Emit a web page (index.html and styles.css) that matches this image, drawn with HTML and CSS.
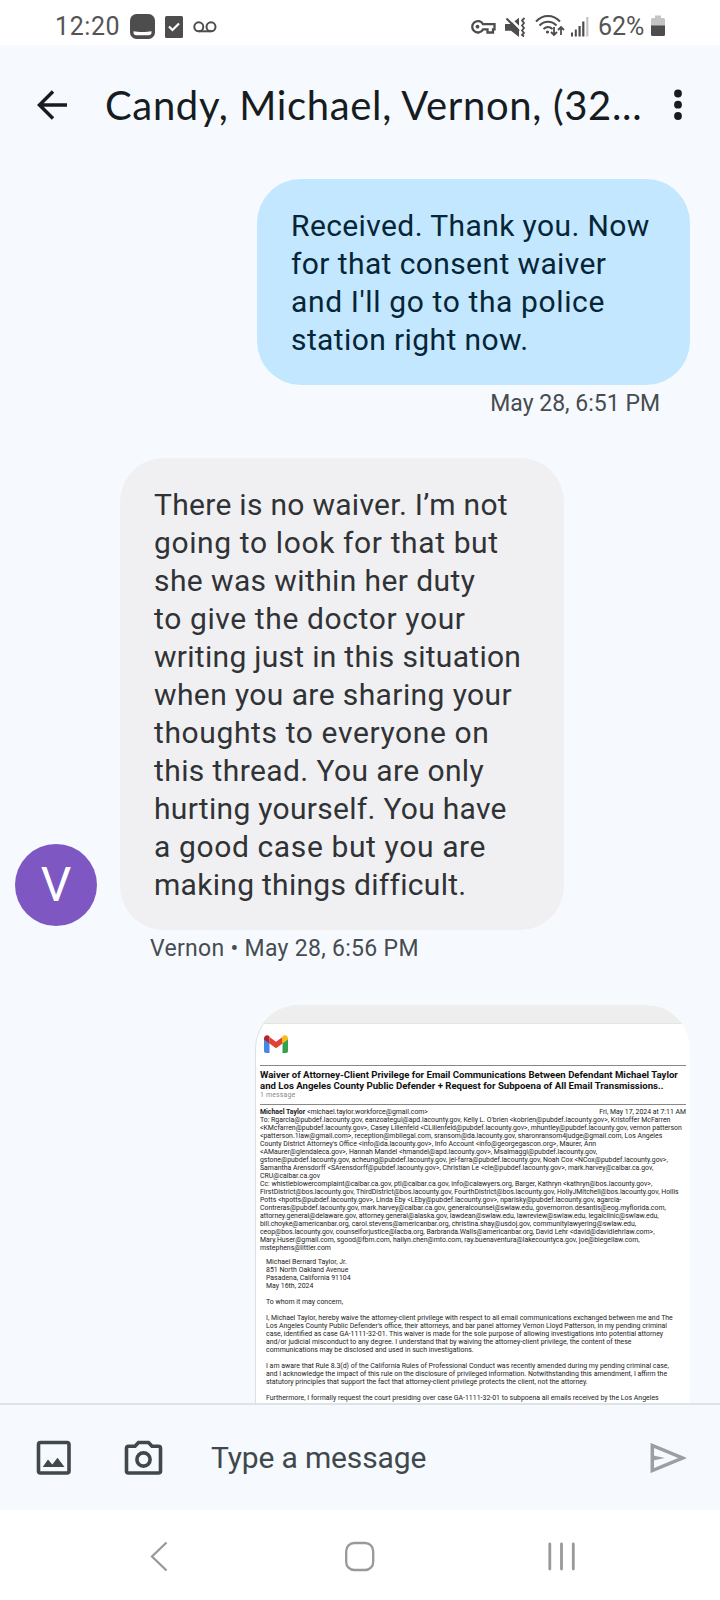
FILE: index.html
```html
<!DOCTYPE html>
<html lang="en">

<head>
  <meta charset="UTF-8" />
  <meta name="viewport" content="width=device-width, initial-scale=1.0" />
  <title>Messages</title>
  <link rel="stylesheet" href="styles.css">
</head>

<body>

  <!-- Status bar -->
  <div class="statusbar">
    <div class="status-left">
      <span class="clock">12:20</span>
      <svg class="app" width="25" height="25" viewBox="0 0 25 25">
        <rect width="25" height="25" rx="6.5" fill="#4d4d4d" />
        <path d="M3.500 17.300c4.500.9 13.500.9 18 0v1.200q0 2.800-2.800 2.800h-12.400q-2.800 0-2.800-2.800z" fill="#fff" />
      </svg>
      <svg class="task" width="18" height="22" viewBox="0 0 18 22">
        <rect width="18" height="22" rx="1.500" fill="#4d4d4d" />
        <path d="M4 10.500l3.500 3.500 6.500-6.500" fill="none" stroke="#fff" stroke-width="2.200" />
      </svg>
      <svg class="voicemail" width="24" height="12" viewBox="0 0 24 12" fill="none" stroke="#4d4d4d" stroke-width="2">
        <circle cx="5.800" cy="5.800" r="4.500" />
        <circle cx="18" cy="5.800" r="4.500" />
        <path d="M5.800 10.300H18" />
      </svg>
    </div>
    <div class="status-right">
      <svg class="key" width="25" height="16" viewBox="0 0 25 16" fill="none" stroke="#4d4d4d" stroke-width="2.300">
        <path d="M12 5.200A5.700 5.700 0 1 0 12 10.400H16.500V13.500H22V10.400H23.500V5.200Z" />
        <circle cx="6.500" cy="7.700" r="1.900" fill="#4d4d4d" stroke="none" />
      </svg>
      <svg class="mute" width="21" height="21" viewBox="0 0 21 21">
        <path d="M0 7h5l2-1.700 7 7V20L6 13.700H0zM9.500 4.200L14 0.800v8z" fill="#4d4d4d" />
        <path d="M1.500 1.500L14 14" stroke="#4d4d4d" stroke-width="2" />
        <path d="M19.500 1l-2.500 2.500 2 2.500-2 2.500 2 2.500-2 2.500 2 2.500-2 2 2 1.500" fill="none" stroke="#4d4d4d" stroke-width="1.800" />
      </svg>
      <svg class="wifi" width="30" height="22" viewBox="0 0 30 22" fill="none" stroke="#4d4d4d" stroke-width="2">
        <path d="M1 6.500C8-.8 18-.8 25 6.500M4.500 10.500c5-5 12-5 17 0M8.500 14c3-2.700 6-2.700 9 0" />
        <circle cx="12.500" cy="17" r="1.600" fill="#4d4d4d" stroke="none" />
        <path d="M19 12v8M16 17l3 3 3-3M26 20v-8M23 15l3-3 3 3" stroke-width="1.800" />
      </svg>
      <svg class="signal" width="19" height="20" viewBox="0 0 19 20" fill="#4d4d4d">
        <rect x="0" y="15.500" width="2" height="4" />
        <rect x="3.800" y="12.500" width="2" height="7" />
        <rect x="7.500" y="9" width="2.200" height="10.500" />
        <rect x="11.200" y="4.500" width="2.200" height="15" />
        <rect x="15.200" y="0" width="2.200" height="19.500" fill="#c4c4c4" />
      </svg>
      <span class="percent">62%</span>
      <svg class="battery" width="14" height="22" viewBox="0 0 14 22">
        <path d="M4 0.500h6V3h2.500q1.500 0 1.500 1.500V11H0V4.500Q0 3 1.500 3H4z" fill="#c4c4c4" />
        <path d="M0 10.500h14v9q0 1.500-1.500 1.500h-11Q0 21 0 19.500z" fill="#4d4d4d" />
      </svg>
    </div>
  </div>

  <!-- Conversation header -->
  <header class="header">
    <svg class="back" width="31" height="30" viewBox="0 0 31 30" fill="none" stroke="#171c1f" stroke-width="3.500">
      <path d="M30 15H2.500M16 1.500L2.500 15 16 28.500" />
    </svg>
    <h1 class="title">Candy, Michael, Vernon, (32...</h1>
    <svg class="more" width="8" height="32" viewBox="0 0 8 32" fill="#171c1f">
      <circle cx="4" cy="4.500" r="3.900" />
      <circle cx="4" cy="15.700" r="3.900" />
      <circle cx="4" cy="27" r="3.900" />
    </svg>
  </header>

  <!-- Thread -->
  <main class="thread">
    <div class="bubble sent">Received. Thank you. Now<br>for that consent waiver<br><span class="loose">and I'll go to tha police</span><br>station right now.</div>
    <div class="meta meta-sent">May 28, 6:51 PM</div>

    <div class="row">
      <div class="avatar">V</div>
      <div class="bubble received"><span class="tight">There is no waiver. I’m not</span><br><span class="loose">going to look for that but</span><br>she was within her duty<br><span class="loose">to give the doctor your</span><br><span class="tight">writing just in this situation</span><br>when you are sharing your<br><span class="loose">thoughts to everyone on</span><br>this thread. You are only<br><span class="tight">hurting yourself. You have</span><br><span class="loose">a good case but you are</span><br><span class="tight">making things difficult.</span></div>
    </div>
    <div class="meta meta-received">Vernon • May 28, 6:56 PM</div>

    <!-- Attached email -->
    <div class="attachment">
      <div class="page-top"></div>
      <div class="mail">
        <svg class="gmail" width="24" height="18" viewBox="0 0 24 18">
          <path d="M0 3.500l5.500 4V18H2Q0 18 0 16z" fill="#4a86e8" />
          <path d="M24 3.500l-5.500 4V18H22q2 0 2-2z" fill="#34a04f" />
          <path d="M5.500 2L12 6.800 18.500 2v6.500L12 13.300 5.500 8.500z" fill="#e34133" />
          <path d="M0 3.500C0 .5 3-.8 5.500 1.200v7.300L0 4.500z" fill="#b5252b" />
          <path d="M24 3.500C24 .5 21-.8 18.500 1.200v7.300L24 4.500z" fill="#f8bd11" />
        </svg>
        <div class="subject">Waiver of Attorney-Client Privilege for Email Communications Between Defendant Michael Taylor<br>and Los Angeles County Public Defender + Request for Subpoena of All Email Transmissions..</div>
        <div class="count">1 message</div>
        <div class="from">
          <span><b>Michael Taylor</b> &lt;michael.taylor.workforce@gmail.com&gt;</span>
          <span>Fri, May 17, 2024 at 7:11 AM</span>
        </div>
        <div class="lines">To: Rgarcia@pubdef.lacounty.gov, eanzoategui@apd.lacounty.gov, Kelly L. O'brien &lt;kobrien@pubdef.lacounty.gov&gt;, Kristoffer McFarren
&lt;KMcfarren@pubdef.lacounty.gov&gt;, Casey Lilienfeld &lt;CLilienfeld@pubdef.lacounty.gov&gt;, mhuntley@pubdef.lacounty.gov, vernon patterson
&lt;patterson.1law@gmail.com&gt;, reception@mbllegal.com, sransom@da.lacounty.gov, sharonransom4judge@gmail.com, Los Angeles
County District Attorney's Office &lt;info@da.lacounty.gov&gt;, Info Account &lt;info@georgegascon.org&gt;, Maurer, Ann
&lt;AMaurer@glendaleca.gov&gt;, Hannah Mandel &lt;hmandel@apd.lacounty.gov&gt;, Msalmaggi@pubdef.lacounty.gov,
gstone@pubdef.lacounty.gov, acheung@pubdef.lacounty.gov, jel-farra@pubdef.lacounty.gov, Noah Cox &lt;NCox@pubdef.lacounty.gov&gt;,
Samantha Arensdorff &lt;SArensdorff@pubdef.lacounty.gov&gt;, Christian Le &lt;cle@pubdef.lacounty.gov&gt;, mark.harvey@calbar.ca.gov,
CRU@calbar.ca.gov
Cc: whistleblowercomplaint@calbar.ca.gov, ptl@calbar.ca.gov, info@calawyers.org, Barger, Kathryn &lt;kathryn@bos.lacounty.gov&gt;,
FirstDistrict@bos.lacounty.gov, ThirdDistrict@bos.lacounty.gov, FourthDistrict@bos.lacounty.gov, HollyJMitchell@bos.lacounty.gov, Hollis
Potts &lt;hpotts@pubdef.lacounty.gov&gt;, Linda Eby &lt;LEby@pubdef.lacounty.gov&gt;, nparisky@pubdef.lacounty.gov, agarcia-
Contreras@pubdef.lacounty.gov, mark.harvey@calbar.ca.gov, generalcounsel@swlaw.edu, governorron.desantis@eog.myflorida.com,
attorney.general@delaware.gov, attorney.general@alaska.gov, lawdean@swlaw.edu, lawreview@swlaw.edu, legalclinic@swlaw.edu,
bill.choyke@americanbar.org, carol.stevens@americanbar.org, christina.shay@usdoj.gov, communitylawyering@swlaw.edu,
ceop@bos.lacounty.gov, counselforjustice@lacba.org, Barbranda.Walls@americanbar.org, David Lehr &lt;david@davidlehrlaw.com&gt;,
Mary.Huser@gmail.com, sgood@fbm.com, hailyn.chen@mto.com, ray.buenaventura@lakecountyca.gov, joe@biegellaw.com,
mstephens@littler.com</div>
        <div class="lines letter">Michael Bernard Taylor, Jr.
851 North Oakland Avenue
Pasadena, California 91104
May 16th, 2024

To whom it may concern,

I, Michael Taylor, hereby waive the attorney-client privilege with respect to all email communications exchanged between me and The
Los Angeles County Public Defender's office, their attorneys, and bar panel attorney Vernon Lloyd Patterson, in my pending criminal
case, identified as case GA-1111-32-01. This waiver is made for the sole purpose of allowing investigations into potential attorney
and/or judicial misconduct to any degree. I understand that by waiving the attorney-client privilege, the content of these
communications may be disclosed and used in such investigations.

I am aware that Rule 8.3(d) of the California Rules of Professional Conduct was recently amended during my pending criminal case,
and I acknowledge the impact of this rule on the disclosure of privileged information. Notwithstanding this amendment, I affirm the
statutory principles that support the fact that attorney-client privilege protects the client, not the attorney.

Furthermore, I formally request the court presiding over case GA-1111-32-01 to subpoena all emails received by the Los Angeles</div>
      </div>
    </div>
  </main>

  <!-- Composer -->
  <div class="composer">
    <svg class="gallery" width="36" height="36" viewBox="0 0 36 36">
      <rect x="2.500" y="2.500" width="30.500" height="30.500" rx="2" fill="none" stroke="#40484c" stroke-width="3.600" />
      <path d="M6.700 27l5.300-7.500 4.300 5 5.200-6.700L28.500 27z" fill="#40484c" />
    </svg>
    <svg class="camera" width="39" height="36" viewBox="0 0 39 36" fill="none" stroke="#40484c" stroke-width="3.600">
      <path d="M4.500 6.300H11l3.500-3.800h10L28 6.300h6.500q2 0 2 2V31q0 2-2 2h-30q-2 0-2-2V8.300q0-2 2-2z" />
      <circle cx="19.500" cy="19.500" r="6.600" />
    </svg>
    <span class="placeholder">Type a message</span>
    <svg class="send" width="36" height="30" viewBox="0 0 36 30">
      <path d="M2.300 2.500V27.500L32.500 15z" fill="none" stroke="#9a9fa6" stroke-width="3.500" />
      <path d="M2 12.200L15 15 2 17.800z" fill="#9a9fa6" />
    </svg>
  </div>

  <!-- System navigation -->
  <nav class="navbar">
    <svg width="30" height="31" viewBox="0 0 30 31" fill="none" stroke="#999" stroke-width="2.300">
      <path d="M22.500 1.500L8 15.500 22.500 29.500" />
    </svg>
    <svg width="30" height="31" viewBox="0 0 30 31" fill="none" stroke="#999" stroke-width="2.300">
      <rect x="1.200" y="2" width="27" height="27" rx="8" />
    </svg>
    <svg width="30" height="31" viewBox="0 0 30 31" stroke="#999" stroke-width="2.800" stroke-linecap="round">
      <path d="M3.800 3v25M15.500 3v25M27.300 3v25" />
    </svg>
  </nav>

</body>

</html>
```
FILE: styles.css
```css
:root {
  --app-bg: #f6faff;
  --sent: #c2e7ff;
  --received: #f0f0f2;
  --icon: #40484c;
}

* {
  box-sizing: border-box;
}

body {
  margin: 0;
  font-family: Roboto, "Liberation Sans", sans-serif;
  display: flex;
  flex-direction: column;
  height: 1600px;
  overflow: hidden;
  background-color: var(--app-bg);
}

svg {
  display: block;
  flex: none;
}

/* Status bar */
.statusbar {
  height: 45px;
  padding: 8px 55px 0 55px;
  background-color: #fff;
  display: flex;
  justify-content: space-between;
  color: #545454;
  font-size: 25px;
  line-height: 38px;
}

.status-left,
.status-right {
  display: flex;
  align-items: center;
  height: 38px;
}

.app,
.task,
.voicemail {
  margin-top: -1px;
}

.clock {
  width: 75px;
  letter-spacing: 0.6px;
}

.task {
  margin-left: 10px;
}

.voicemail {
  margin-left: 10px;
}

.mute {
  margin-left: 9px;
}

.wifi {
  margin-left: 9px;
  margin-top: -3px;
}

.signal {
  margin-left: 6px;
}

.percent {
  width: 53px;
  margin-left: 8px;
}

.battery {
  margin-top: -2px;
}

/* Header */
.header {
  height: 110px;
  padding: 9px 38px 0 37px;
  display: flex;
  align-items: center;
}

.title {
  flex: 1;
  margin: 0 0 0 37px;
  font-family: Lato, sans-serif;
  font-size: 40px;
  font-weight: 400;
  line-height: 50px;
  letter-spacing: 0.65px;
  color: #171c1f;
  white-space: nowrap;
}

/* Thread */
.thread {
  height: 1248px;
  padding: 24px 30px 0 15px;
  display: flex;
  flex-direction: column;
  overflow: hidden;
}

.bubble {
  padding: 28px 0 26px 34px;
  border-radius: 44px;
  font-size: 30px;
  line-height: 38px;
  letter-spacing: 0.4px;
  white-space: nowrap;
}

.loose {
  letter-spacing: 0.62px;
}

.tight {
  letter-spacing: 0.29px;
}

.sent {
  width: 433px;
  align-self: flex-end;
  background-color: var(--sent);
  color: #062536;
}

.received {
  width: 444px;
  background-color: var(--received);
  color: #303336;
}

.meta {
  font-size: 23px;
  line-height: 30px;
  color: #474c50;
}

.meta-sent {
  align-self: flex-end;
  margin: 4px 30px 0 0;
}

.row {
  display: flex;
  align-items: flex-end;
  gap: 23px;
  margin-top: 39px;
}

.avatar {
  width: 82px;
  height: 82px;
  margin-bottom: 4px;
  border-radius: 50%;
  background-color: #7e57c2;
  color: #fff;
  font-size: 48px;
  line-height: 82px;
  text-align: center;
}

.meta-received {
  margin: 4px 0 0 135px;
  letter-spacing: 0.3px;
}

/* Attached email */
.attachment {
  flex: none;
  width: 435px;
  height: 440px;
  margin-top: 41px;
  align-self: flex-end;
  border-radius: 44px;
  border-left: 1px solid #dcdfe3;
  background-color: #fff;
  overflow: hidden;
}

.page-top {
  height: 19px;
  background-color: #eee;
  border-bottom: 1px solid #e4e4e4;
}

.mail {
  padding: 11px 4px 0 4px;
  color: #222;
  font-size: 6.9px;
  line-height: 8px;
}

.gmail {
  margin-left: 4px;
}

.subject {
  margin-top: 12px;
  padding-top: 3px;
  border-top: 1px solid #888;
  font-size: 9.6px;
  font-weight: 700;
  line-height: 11.2px;
  color: #111;
  white-space: nowrap;
}

.count {
  height: 14px;
  line-height: 9px;
  color: #888;
  letter-spacing: 0.2px;
  border-bottom: 1px solid #888;
}

.from {
  display: flex;
  justify-content: space-between;
  padding-top: 3px;
}

.lines {
  white-space: pre;
}

.letter {
  margin: 6px 0 0 6px;
  font-size: 6.95px;
}

/* Composer */
.composer {
  height: 107px;
  padding: 0 34px 0 36px;
  border-top: 2px solid #dde3e8;
  display: flex;
  align-items: center;
}

.camera {
  margin-left: 52px;
}

.placeholder {
  flex: 1;
  margin-left: 48px;
  font-size: 30px;
  letter-spacing: -0.15px;
  color: var(--icon);
}

/* System navigation */
.navbar {
  height: 90px;
  padding: 2px 144px 0;
  background-color: #fff;
  display: flex;
  justify-content: space-between;
  align-items: center;
}
```
